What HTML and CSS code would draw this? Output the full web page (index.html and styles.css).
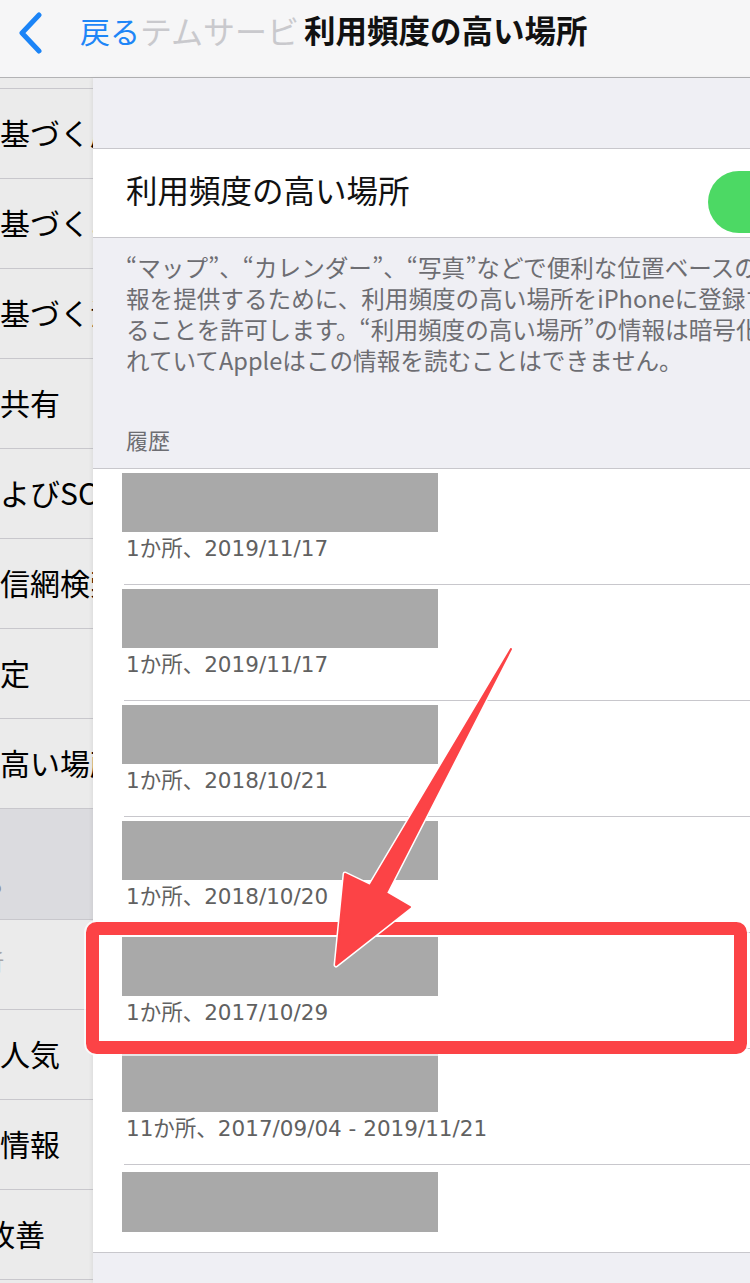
FILE: index.html
```html
<!DOCTYPE html>
<html lang="ja">
  <head>
    <meta charset="UTF-8" />
    <meta name="viewport" content="width=device-width, initial-scale=1.0" />
    <title>利用頻度の高い場所</title>
    <link rel="stylesheet" href="styles.css">
  </head>
  <body>
    <div class="screen">
      <header class="navbar">
        <svg class="back-icon" viewBox="0 0 26 42" width="26" height="42">
          <path d="M22 3 L5 21 L22 39" fill="none" stroke="#1b84f7" stroke-width="5" stroke-linecap="round" stroke-linejoin="round" />
        </svg>
        <span class="back-label">戻る</span>
        <span class="prev-title">テムサービ</span>
        <h1 class="nav-title">利用頻度の高い場所</h1>
      </header>

      <div class="split">
        <ul class="sidebar">
          <li><span>位置情報に基づく広告</span></li>
          <li><span>位置情報に基づくおすすめ</span></li>
          <li><span>位置情報に基づく注意</span></li>
          <li><span>位置情報を共有</span></li>
          <li><span>緊急通報およびSOS</span></li>
          <li><span>携帯電話通信網検索</span></li>
          <li><span>時間帯の設定</span></li>
          <li><span>利用頻度の高い場所</span></li>
          <li class="sidebar-section"><span>製品の改善する</span></li>
          <li class="sidebar-muted"><span>製品改善の解析</span></li>
          <li><span>周辺地域の人気</span></li>
          <li><span>経路と交通情報</span></li>
          <li class="sidebar-shift"><span>マップを改善</span></li>
        </ul>

        <main class="detail">
          <div class="group">
            <div class="cell">
              <span class="cell-title">利用頻度の高い場所</span>
              <span class="switch"></span>
            </div>
          </div>

          <p class="footnote">
            <span>“マップ”、“カレンダー”、“写真”などで便利な位置ベースの情</span>
            <span>報を提供するために、利用頻度の高い場所をiPhoneに登録す</span>
            <span>ることを許可します。“利用頻度の高い場所”の情報は暗号化さ</span>
            <span>れていてAppleはこの情報を読むことはできません。</span>
          </p>

          <h2 class="section-header">履歴</h2>

          <ul class="group history">
            <li class="history-item">
              <div class="place-mask"></div>
              <div class="place-meta">1か所、2019/11/17</div>
            </li>
            <li class="history-item">
              <div class="place-mask"></div>
              <div class="place-meta">1か所、2019/11/17</div>
            </li>
            <li class="history-item">
              <div class="place-mask"></div>
              <div class="place-meta">1か所、2018/10/21</div>
            </li>
            <li class="history-item">
              <div class="place-mask"></div>
              <div class="place-meta">1か所、2018/10/20</div>
            </li>
            <li class="history-item">
              <div class="place-mask"></div>
              <div class="place-meta">1か所、2017/10/29</div>
            </li>
            <li class="history-item">
              <div class="place-mask"></div>
              <div class="place-meta">11か所、2017/09/04 - 2019/11/21</div>
            </li>
            <li class="history-item history-item--bare">
              <div class="place-mask"></div>
            </li>
          </ul>
        </main>
      </div>

      <!-- annotation drawn over the screenshot -->
      <svg class="annotation" viewBox="0 0 750 1283" width="750" height="1283">
        <rect x="92.5" y="928.5" width="648" height="119" rx="4" fill="none" stroke="#ffffff" stroke-width="17" stroke-opacity="0.7" />
        <rect x="92.5" y="928.5" width="648" height="119" rx="4" fill="none" stroke="#fc4346" stroke-width="13" />
        <path d="M511 649 L386 893 L410 907 L336 965 L345 874 L370 886 Z" fill="#fc4346" stroke="#ffffff" stroke-width="5" stroke-linejoin="round" paint-order="stroke" />
        <path d="M511 649 L386 893 L410 907 L336 965 L345 874 L370 886 Z" fill="#fc4346" stroke="#fc4346" stroke-width="2" stroke-linejoin="round" />
      </svg>
    </div>
  </body>
</html>
```

FILE: styles.css
```css
body {
  margin: 0;
  font-family: "Noto Sans CJK JP", "Noto Sans", sans-serif;
  background-color: #efeff4;
  color: #000;
}
.screen {
  position: relative;
  width: 750px;
  height: 1283px;
  overflow: hidden;
}
.navbar {
  display: flex;
  align-items: center;
  height: 60px;
  padding: 0 0 17px 17px;
  background-color: #f6f6f7;
  border-bottom: 1px solid #b3b3b5;
}
.back-icon {
  flex-shrink: 0;
  margin: 6px 37px 0 0;
}
.back-label {
  font-size: 30px;
  line-height: 1;
  color: #1e86f7;
}
.prev-title {
  font-size: 32px;
  line-height: 1;
  color: #c9c9cd;
}
.nav-title {
  margin: 0 0 0 5px;
  font-size: 31.5px;
  line-height: 1;
  font-weight: 700;
  color: #111;
  white-space: nowrap;
}
.split {
  display: flex;
  height: 1205px;
}
.sidebar {
  flex-shrink: 0;
  width: 93px;
  margin: 0;
  padding: 10px 0 0;
  list-style: none;
  background-color: #ebebeb;
  overflow: hidden;
}
.sidebar li {
  display: flex;
  align-items: center;
  height: 89px;
  border-top: 1px solid #c8c7cc;
  font-size: 30px;
  white-space: nowrap;
}
.sidebar li:last-child {
  border-bottom: 1px solid #c8c7cc;
}
.sidebar span {
  margin: 0 0 3px -150px;
}
.sidebar .sidebar-shift span {
  margin-left: -135px;
}
.sidebar .sidebar-section {
  height: 110px;
  align-items: flex-end;
  background-color: #dbdbdf;
  font-size: 22px;
  color: #8e8e93;
}
.sidebar .sidebar-section span {
  margin-bottom: 20px;
}
.sidebar .sidebar-muted {
  align-items: flex-start;
  font-size: 22px;
  color: #a4a4a8;
}
.sidebar .sidebar-muted span {
  margin-top: 24px;
}
.detail {
  flex-shrink: 0;
  width: 749px;
  padding-top: 70px;
  box-shadow: -1px 0 4px rgba(0, 0, 0, 0.07);
}
.group {
  margin: 0;
  padding: 0;
  list-style: none;
  background-color: #fff;
  border-top: 1px solid #c8c7cc;
  border-bottom: 1px solid #c8c7cc;
}
.cell {
  display: flex;
  align-items: center;
  height: 80px;
  padding: 0 32px 8px 33px;
}
.cell-title {
  font-size: 31.5px;
  color: #111;
}
.switch {
  align-self: flex-end;
  width: 102px;
  height: 62px;
  margin: 0 0 -4px auto;
  border-radius: 31px;
  background-color: #4cd964;
}
.footnote {
  margin: 14px 0 0;
  padding-left: 33px;
  font-size: 23.6px;
  line-height: 31px;
  color: #6d6d72;
}
.footnote span {
  display: block;
  white-space: nowrap;
}
.section-header {
  margin: 49px 0 15px;
  padding-left: 33px;
  font-size: 22px;
  line-height: 28px;
  font-weight: 400;
  color: #6d6d72;
}
.history-item {
  margin-left: 31px;
  padding: 4px 0 20px;
  border-bottom: 1px solid #c8c7cc;
}
.history-item--bare {
  padding: 7px 0 20px;
  border-bottom: none;
}
.place-mask {
  width: 316px;
  height: 59px;
  margin-left: -2px;
  background-color: #a9a9a9;
}
.history-item--bare .place-mask {
  height: 60px;
}
.place-meta {
  margin-top: 2px;
  padding-left: 2px;
  font-family: "DejaVu Sans", "Noto Sans CJK JP", sans-serif;
  font-size: 21.5px;
  line-height: 30px;
  color: #616161;
  white-space: nowrap;
}
.annotation {
  position: absolute;
  top: 0;
  left: 0;
  pointer-events: none;
}
```
